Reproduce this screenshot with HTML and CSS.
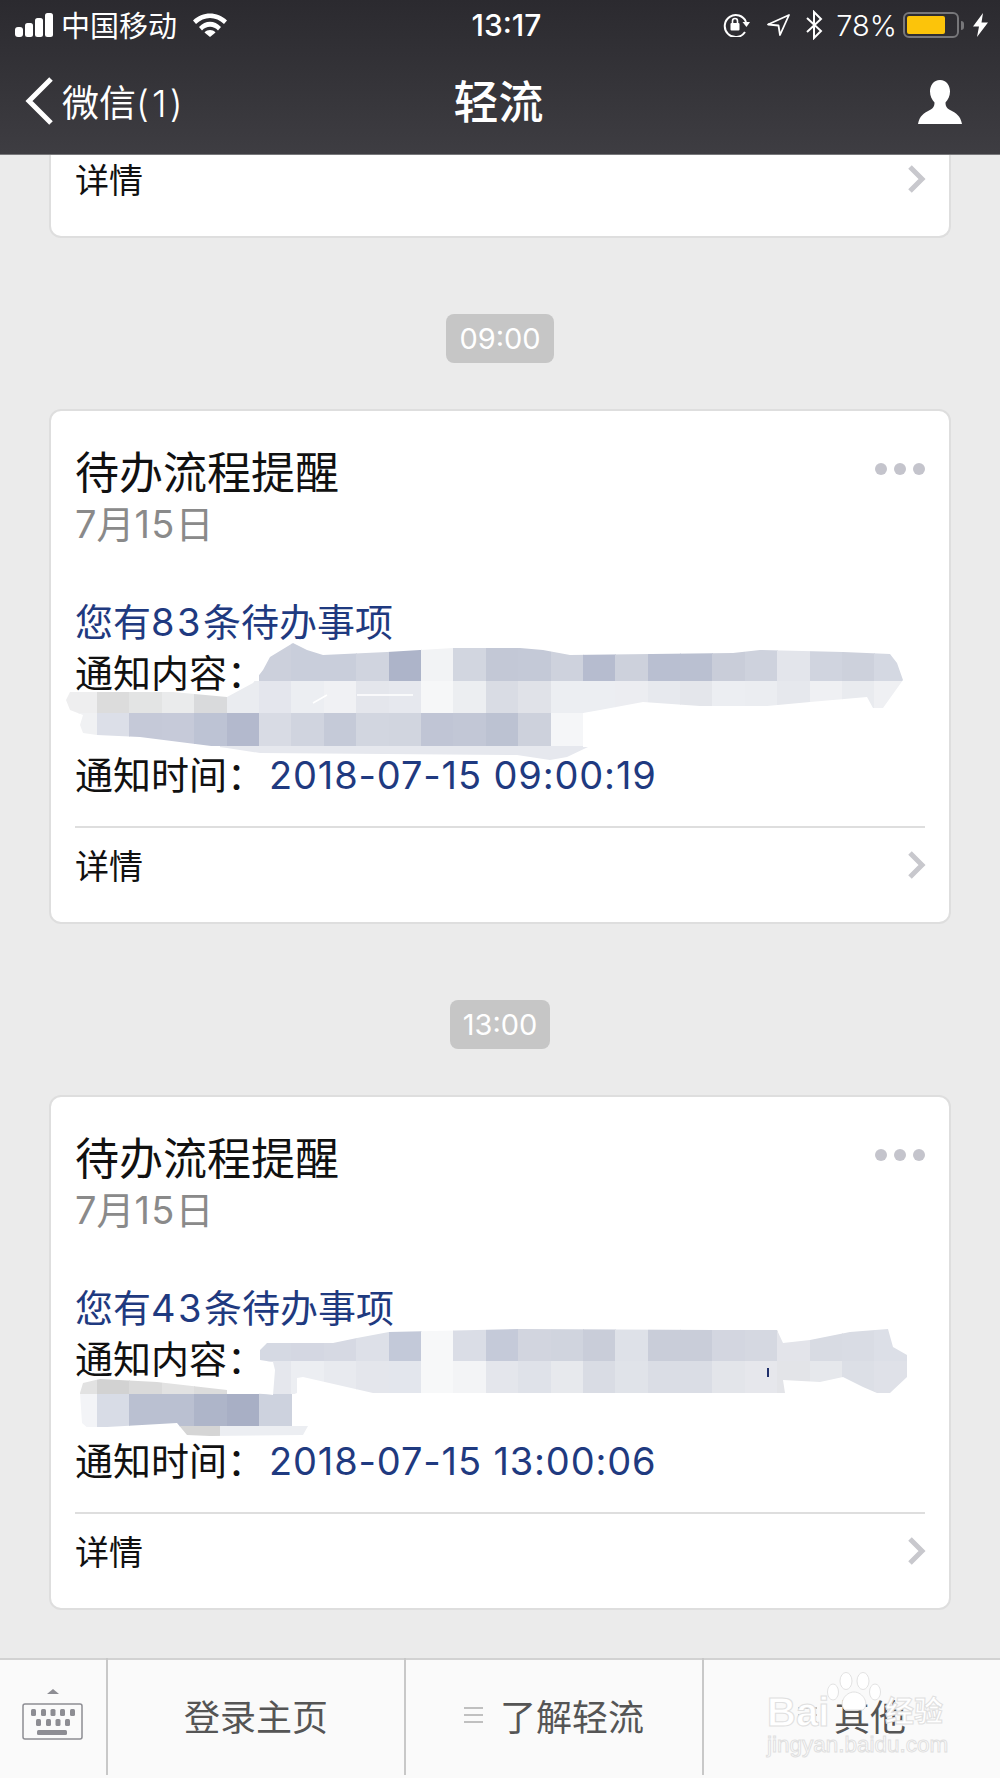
FILE: index.html
```html
<!DOCTYPE html>
<html lang="zh-CN">
<head>
    <meta charset="UTF-8">
    <meta name="viewport" content="width=device-width, initial-scale=1.0">
    <title>轻流</title>
    <link rel="stylesheet" href="styles.css">
</head>
<body>

    <header class="top">
        <div class="status">
            <div class="status-left">
                <svg class="signal" width="38" height="24" viewBox="0 0 38 24" fill="#fff">
                    <rect x="0" y="14" width="8" height="10" rx="3"/>
                    <rect x="10" y="10" width="8" height="14" rx="2.5"/>
                    <rect x="20" y="5" width="8" height="19" rx="2.5"/>
                    <rect x="30" y="0" width="8" height="24" rx="2.5"/>
                </svg>
                <span class="carrier">中国移动</span>
                <svg class="wifi" width="34" height="24" viewBox="0 0 34 24" fill="#fff">
                    <path d="M0 7.500C9.500-1.800 24.500-1.800 34 7.500L31 11C23 3 11 3 3 11Z"/>
                    <path d="M6 14C12.500 7 21.500 7 28 14L25 17.500C20.500 12.500 13.500 12.500 9 17.500Z"/>
                    <path d="M11.500 19.500C14.500 16.300 19.500 16.300 22.500 19.500L17 24Z"/>
                </svg>
            </div>
            <span class="clock">13:17</span>
            <div class="status-right">
                <svg class="ico-lock" width="28" height="24" viewBox="0 0 28 24" fill="none">
                    <path d="M22 19A11 11 0 1 1 23 9" stroke="#fff" stroke-width="2"/>
                    <path d="M19.500 9H27L23.500 14Z" fill="#fff"/>
                    <rect x="7.500" y="10" width="9" height="7.500" rx="1" fill="#fff"/>
                    <path d="M9.500 10V8A2.500 2.500 0 0 1 14.500 8V10" stroke="#fff" stroke-width="1.600"/>
                </svg>
                <svg class="ico-loc" width="23" height="22" viewBox="0 0 23 22" fill="none">
                    <path d="M22 1L1 10.500L11.500 11.500L13 21Z" stroke="#fff" stroke-width="1.800" stroke-linejoin="round"/>
                </svg>
                <svg class="ico-bt" width="17" height="30" viewBox="0 0 17 30" fill="none">
                    <path d="M1 8L15 21L8 28V2L15 9L1 22" stroke="#fff" stroke-width="2"/>
                </svg>
                <span class="percent">78%</span>
                <div class="battery"><div class="battery-fill"></div></div>
                <div class="battery-nub"></div>
                <svg class="ico-bolt" width="15" height="24" viewBox="0 0 15 24" fill="#fff">
                    <path d="M10 0L0 13.500H6L4 24L15 9.500H8.500Z"/>
                </svg>
            </div>
        </div>
        <nav class="nav">
            <div class="nav-back">
                <svg width="28" height="48" viewBox="0 0 28 48" fill="none">
                    <path d="M26 2L4 24L26 46" stroke="#fff" stroke-width="5"/>
                </svg>
                <span>微信<span class="nav-count">(1)</span></span>
            </div>
            <div class="nav-title">轻流</div>
            <div class="nav-user">
                <svg width="44" height="44" viewBox="0 0 44 44" fill="#fff">
                    <path d="M22 0C15.500 0 12 5.500 12 11.500C12 16 14 20 16.500 22.500C16.500 26.500 15 28.500 11 30.500C6 33 1.500 36 0 44H44C42.500 36 38 33 33 30.500C29 28.500 27.500 26.500 27.500 22.500C30 20 32 16 32 11.500C32 5.500 28.500 0 22 0Z"/>
                </svg>
            </div>
        </nav>
    </header>

    <main class="chat">
        <section class="card card-tail">
            <div class="detail">
                <span>详情</span>
                <svg class="chevron" width="20" height="28" viewBox="0 0 20 28" fill="none">
                    <path d="M3 2L15 14L3 26" stroke="#c8c8cd" stroke-width="5"/>
                </svg>
            </div>
        </section>

        <div class="time"><span>09:00</span></div>

        <section class="card">
            <div class="dots"><i></i><i></i><i></i></div>
            <h2 class="card-title">待办流程提醒</h2>
            <p class="card-date">7月<span class="date-num">15</span>日</p>
            <div class="card-body">
                <p class="blue">您有<span class="num">83</span>条待办事项</p>
                <p>通知内容：</p>
                <p>&nbsp;</p>
                <p>通知时间：<span class="blue stamp">2018-07-15 09:00:19</span></p>
            </div>
            <div class="detail detail-line">
                <span>详情</span>
                <svg class="chevron" width="20" height="28" viewBox="0 0 20 28" fill="none">
                    <path d="M3 2L15 14L3 26" stroke="#c8c8cd" stroke-width="5"/>
                </svg>
            </div>
            <!-- mosaic over the hidden text -->
            <svg class="redact" width="902" height="515" viewBox="49 409 902 515">
                <clipPath id="shapeOne">
                    <path d="M66 700L70 692L173 692L227 697L253 683L263 670L270 657L293 643L307 650L323 655L387 652L453 648L520 648L543 650L570 655L733 653L760 650L843 652L890 654L897 663L903 680L883 708L873 708L867 697L810 702L767 706L700 706L643 702L600 710L583 713L583 747L588 747L567 757L550 760L517 755L260 753L227 748L140 737L97 735L83 733L80 725L83 715L70 710Z"/>
                </clipPath>
                <g clip-path="url(#shapeOne)">
                    <rect x="60" y="680" width="37" height="34" fill="#eeeeef"/>
                    <rect x="75" y="713" width="22" height="33" fill="#f0f1f3"/>
                    <g transform="translate(0 640)">
                        <rect x="259" width="33" height="41" fill="#ccd0dc"/>
                        <rect x="291" width="33" height="41" fill="#c9cedb"/>
                        <rect x="324" width="33" height="41" fill="#c9cedb"/>
                        <rect x="356" width="33" height="41" fill="#d0d4df"/>
                        <rect x="389" width="33" height="41" fill="#adb4c9"/>
                        <rect x="421" width="33" height="41" fill="#f2f3f5"/>
                        <rect x="453" width="33" height="41" fill="#d2d6e0"/>
                        <rect x="486" width="33" height="41" fill="#c3c8d6"/>
                        <rect x="518" width="33" height="41" fill="#c4c9d7"/>
                        <rect x="551" width="33" height="41" fill="#ced2dd"/>
                        <rect x="583" width="33" height="41" fill="#b6bccf"/>
                        <rect x="615" width="33" height="41" fill="#cdd1dc"/>
                        <rect x="648" width="33" height="41" fill="#b9bfd1"/>
                        <rect x="680" width="33" height="41" fill="#bac0d1"/>
                        <rect x="712" width="33" height="41" fill="#c9cdd9"/>
                        <rect x="745" width="33" height="41" fill="#ced2dd"/>
                        <rect x="777" width="33" height="41" fill="#e3e5eb"/>
                        <rect x="810" width="33" height="41" fill="#d0d4df"/>
                        <rect x="842" width="33" height="41" fill="#cdd1dc"/>
                        <rect x="874" width="33" height="41" fill="#d4d8e2"/>
                    </g>
                    <g transform="translate(0 681)">
                        <rect x="97" width="33" height="33" fill="#dcdcdc"/>
                        <rect x="129" width="33" height="33" fill="#e3e4e4"/>
                        <rect x="162" width="33" height="33" fill="#eaebec"/>
                        <rect x="194" width="33" height="33" fill="#d9dadc"/>
                        <rect x="227" width="33" height="33" fill="#eaecf0"/>
                        <rect x="259" width="33" height="33" fill="#e4e6ed"/>
                        <rect x="291" width="33" height="33" fill="#eceef2"/>
                        <rect x="324" width="33" height="33" fill="#f0f1f4"/>
                        <rect x="356" width="33" height="33" fill="#e4e6ec"/>
                        <rect x="389" width="33" height="33" fill="#e6e8ee"/>
                        <rect x="421" width="33" height="33" fill="#f6f7f8"/>
                        <rect x="453" width="33" height="33" fill="#eceef1"/>
                        <rect x="486" width="33" height="33" fill="#d9dce4"/>
                        <rect x="518" width="33" height="33" fill="#e0e2e8"/>
                        <rect x="551" width="33" height="33" fill="#eceef2"/>
                        <rect x="583" width="33" height="33" fill="#eceef2"/>
                        <rect x="615" width="33" height="33" fill="#ecedf1"/>
                        <rect x="648" width="33" height="33" fill="#e7e9ee"/>
                        <rect x="680" width="33" height="33" fill="#e4e6eb"/>
                        <rect x="712" width="33" height="33" fill="#eceef2"/>
                        <rect x="745" width="33" height="33" fill="#ebedf1"/>
                        <rect x="777" width="33" height="33" fill="#e6e8ed"/>
                        <rect x="810" width="33" height="33" fill="#eff0f3"/>
                        <rect x="842" width="33" height="33" fill="#e9ebef"/>
                        <rect x="874" width="33" height="33" fill="#eff0f3"/>
                    </g>
                    <g transform="translate(0 713)">
                        <rect x="97" width="33" height="33" fill="#dcdfe8"/>
                        <rect x="129" width="33" height="33" fill="#c5c9d8"/>
                        <rect x="162" width="33" height="33" fill="#c6cad9"/>
                        <rect x="194" width="33" height="33" fill="#bdc3d4"/>
                        <rect x="227" width="33" height="33" fill="#b3b9cd"/>
                        <rect x="259" width="33" height="33" fill="#d8dbe4"/>
                        <rect x="291" width="33" height="33" fill="#d0d4df"/>
                        <rect x="324" width="33" height="33" fill="#c5cad8"/>
                        <rect x="356" width="33" height="33" fill="#d2d6e0"/>
                        <rect x="389" width="33" height="33" fill="#d1d5df"/>
                        <rect x="421" width="33" height="33" fill="#c0c5d5"/>
                        <rect x="453" width="33" height="33" fill="#c2c7d6"/>
                        <rect x="486" width="33" height="33" fill="#bcc2d2"/>
                        <rect x="518" width="33" height="33" fill="#cdd1dc"/>
                        <rect x="551" width="33" height="33" fill="#f5f6f8"/>
                    </g>
                    <rect x="220" y="746" width="370" height="15" fill="#e6e8ee"/>
                    <path d="M313 703L327 695M357 695H413" stroke="#fff" stroke-width="1.500" fill="none"/>
                </g>
            </svg>
        </section>

        <div class="time"><span>13:00</span></div>

        <section class="card">
            <div class="dots"><i></i><i></i><i></i></div>
            <h2 class="card-title">待办流程提醒</h2>
            <p class="card-date">7月<span class="date-num">15</span>日</p>
            <div class="card-body">
                <p class="blue">您有<span class="num">43</span>条待办事项</p>
                <p>通知内容：</p>
                <p>&nbsp;</p>
                <p>通知时间：<span class="blue stamp">2018-07-15 13:00:06</span></p>
            </div>
            <div class="detail detail-line">
                <span>详情</span>
                <svg class="chevron" width="20" height="28" viewBox="0 0 20 28" fill="none">
                    <path d="M3 2L15 14L3 26" stroke="#c8c8cd" stroke-width="5"/>
                </svg>
            </div>
            <svg class="redact" width="902" height="515" viewBox="49 1095 902 515">
                <clipPath id="shapeTwo">
                    <path d="M260 1355L260 1350L267 1343L333 1343L357 1338L389 1332L520 1329L713 1330L777 1330L783 1343L810 1340L850 1332L888 1329L893 1347L907 1355L907 1377L890 1393L877 1393L863 1387L843 1377L820 1382L783 1380L785 1393L373 1393L303 1377L297 1378L297 1393L292 1395L292 1426L308 1426L303 1435L210 1436L187 1435L177 1423L107 1427L90 1430L82 1423L80 1393L83 1383L100 1379L157 1382L227 1390L273 1395L275 1370L273 1362L260 1360Z"/>
                </clipPath>
                <g clip-path="url(#shapeTwo)">
                    <g transform="translate(0 1325)">
                        <rect x="259" width="33" height="37" fill="#d5d9e3"/>
                        <rect x="291" width="33" height="37" fill="#d4d7e2"/>
                        <rect x="324" width="33" height="37" fill="#d6d9e3"/>
                        <rect x="356" width="33" height="37" fill="#dde0e8"/>
                        <rect x="389" width="33" height="37" fill="#c3c9d9"/>
                        <rect x="421" width="33" height="37" fill="#f7f8f9"/>
                        <rect x="453" width="33" height="37" fill="#dadde6"/>
                        <rect x="486" width="33" height="37" fill="#c5cad9"/>
                        <rect x="518" width="33" height="37" fill="#d2d5df"/>
                        <rect x="551" width="33" height="37" fill="#d0d4de"/>
                        <rect x="583" width="33" height="37" fill="#c9cdd9"/>
                        <rect x="615" width="33" height="37" fill="#dee1e8"/>
                        <rect x="648" width="33" height="37" fill="#c9cdd9"/>
                        <rect x="680" width="33" height="37" fill="#c9cdd9"/>
                        <rect x="712" width="33" height="37" fill="#d3d6e0"/>
                        <rect x="745" width="33" height="37" fill="#d5d8e1"/>
                        <rect x="777" width="33" height="37" fill="#e3e4ea"/>
                        <rect x="810" width="33" height="37" fill="#d8dbe3"/>
                        <rect x="842" width="33" height="37" fill="#d9dce4"/>
                        <rect x="874" width="33" height="37" fill="#dcdfe7"/>
                    </g>
                    <g transform="translate(0 1361)">
                        <rect x="259" width="33" height="36" fill="#e5e7ed"/>
                        <rect x="291" width="33" height="33" fill="#eceef2"/>
                        <rect x="324" width="33" height="33" fill="#e8eaef"/>
                        <rect x="356" width="33" height="33" fill="#e4e6ec"/>
                        <rect x="389" width="33" height="33" fill="#e3e6ed"/>
                        <rect x="421" width="33" height="33" fill="#f7f8f9"/>
                        <rect x="453" width="33" height="33" fill="#f3f4f6"/>
                        <rect x="486" width="33" height="33" fill="#e4e6ec"/>
                        <rect x="518" width="33" height="33" fill="#dfe2e9"/>
                        <rect x="551" width="33" height="33" fill="#e7e9ed"/>
                        <rect x="583" width="33" height="33" fill="#d9dce4"/>
                        <rect x="615" width="33" height="33" fill="#e0e3e9"/>
                        <rect x="648" width="33" height="33" fill="#dadde5"/>
                        <rect x="680" width="33" height="33" fill="#dadde5"/>
                        <rect x="712" width="33" height="33" fill="#e3e5ea"/>
                        <rect x="745" width="33" height="33" fill="#e6e7ec"/>
                        <rect x="777" width="33" height="33" fill="#e3e4e8"/>
                        <rect x="810" width="33" height="33" fill="#e6e8ec"/>
                        <rect x="842" width="33" height="33" fill="#dcdfe6"/>
                        <rect x="874" width="33" height="33" fill="#dfe1e8"/>
                    </g>
                    <g transform="translate(0 1375)">
                        <rect x="75" width="22" height="19" fill="#e2e2e2"/>
                        <rect x="97" width="33" height="19" fill="#d2d2d2"/>
                        <rect x="129" width="33" height="19" fill="#dadada"/>
                        <rect x="162" width="33" height="19" fill="#e2e2e2"/>
                        <rect x="194" width="33" height="19" fill="#dcdcdc"/>
                    </g>
                    <g transform="translate(0 1394)">
                        <rect x="75" width="22" height="33" fill="#f3f4f7"/>
                        <rect x="97" width="33" height="33" fill="#d8dce6"/>
                        <rect x="129" width="33" height="33" fill="#bac0d1"/>
                        <rect x="162" width="33" height="33" fill="#bac0d1"/>
                        <rect x="194" width="33" height="33" fill="#aeb5c9"/>
                        <rect x="227" width="33" height="33" fill="#a8afc5"/>
                        <rect x="259" width="33" height="33" fill="#cdd2de"/>
                    </g>
                    <rect x="175" y="1426" width="45" height="12" fill="#d5d5d5"/>
                    <rect x="220" y="1426" width="90" height="12" fill="#eceef2"/>
                </g>
                <rect x="767" y="1368" width="2" height="9" fill="#1f2f6b"/>
            </svg>
        </section>
    </main>

    <footer class="menu">
        <div class="menu-key">
            <svg width="62" height="54" viewBox="0 0 62 54" fill="#8d8d93">
                <path d="M25 6L31 1L37 6Z"/>
                <rect x="1" y="16" width="59" height="35" rx="2" fill="none" stroke="#8d8d93" stroke-width="1.500"/>
                <rect x="9" y="21" width="5" height="7" rx="1.500"/>
                <rect x="19" y="21" width="5" height="7" rx="1.500"/>
                <rect x="28.500" y="21" width="5" height="7" rx="1.500"/>
                <rect x="38" y="21" width="5" height="7" rx="1.500"/>
                <rect x="48" y="21" width="5" height="7" rx="1.500"/>
                <rect x="14" y="31" width="5" height="7" rx="1.500"/>
                <rect x="24" y="31" width="5" height="7" rx="1.500"/>
                <rect x="33.500" y="31" width="5" height="7" rx="1.500"/>
                <rect x="43" y="31" width="5" height="7" rx="1.500"/>
                <rect x="15" y="42" width="30" height="5" rx="1.500"/>
            </svg>
        </div>
        <div class="menu-item">登录主页</div>
        <div class="menu-item"><span class="bars"><i></i><i></i><i></i></span>了解轻流</div>
        <div class="menu-item"><span class="bars"><i></i><i></i><i></i></span>其他</div>

        <!-- watermark stamped on the photo -->
        <div class="mark">
            <span class="mark-bai">Bai</span>
            <svg class="mark-paw" width="54" height="40" viewBox="0 0 54 40" fill="#fff" stroke="#e2e2e2">
                <ellipse cx="6" cy="20" rx="5.500" ry="8"/>
                <ellipse cx="19" cy="9" rx="6" ry="8.500"/>
                <ellipse cx="36" cy="9" rx="6" ry="8.500"/>
                <ellipse cx="48" cy="20" rx="5.500" ry="8"/>
                <path d="M27 20C18 20 11 32 18 38H36C43 32 36 20 27 20Z"/>
            </svg>
            <span class="mark-jy">经验</span>
            <span class="mark-url">jingyan.baidu.com</span>
        </div>
    </footer>

</body>
</html>
```

FILE: styles.css
```css
/* page */
html, body {
    margin: 0;
    padding: 0;
}

body {
    width: 1000px;
    height: 1778px;
    overflow: hidden;
    display: flex;
    flex-direction: column;
    background-color: #ebebeb;
    font-family: Inter, "Noto Sans CJK SC", sans-serif;
    color: #111;
}

h2, p {
    margin: 0;
    font-weight: normal;
}

/* top bar */
.top {
    height: 154px;
    flex: none;
    background: linear-gradient(#2b2a2f, #36353a 60%, #3e3d42);
    border-bottom: 1px solid #77777a;
    color: #fff;
}

.status {
    height: 50px;
    display: grid;
    grid-template-columns: 1fr auto 1fr;
    align-items: center;
    padding: 0 12px 0 15px;
    font-size: 29px;
}

.status-left, .status-right {
    display: flex;
    align-items: center;
}

.status-right {
    justify-content: flex-end;
}

.carrier {
    margin-left: 8px;
    margin-top: -2px;
    font-size: 29px;
}

.wifi {
    margin-left: 16px;
}

.clock {
    margin-left: 10px;
    font-size: 30px;
    font-weight: 500;
}

.ico-loc {
    margin-left: 16px;
}

.ico-bt {
    margin-left: 16px;
}

.percent {
    margin-left: 13px;
    font-weight: 300;
}

.battery {
    margin-left: 6px;
    width: 56px;
    height: 26px;
    box-sizing: border-box;
    border: 2px solid #77777a;
    border-radius: 6px;
    padding: 2px;
}

.battery-fill {
    width: 38px;
    height: 100%;
    background-color: #fcc40a;
    border-radius: 2px;
}

.battery-nub {
    width: 3px;
    height: 9px;
    margin-left: 2px;
    background-color: #77777a;
    border-radius: 0 3px 3px 0;
}

.ico-bolt {
    margin-left: 9px;
}

.nav {
    height: 104px;
    display: grid;
    grid-template-columns: 1fr auto 1fr;
    align-items: center;
    padding: 0 38px 0 25px;
}

.nav-back {
    display: flex;
    align-items: center;
    gap: 9px;
    font-size: 37px;
    margin-top: -2px;
}

.nav-count {
    font-weight: 300;
    letter-spacing: 3.200px;
}

.nav-title {
    font-size: 45px;
    font-weight: 500;
    margin-left: 10px;
    margin-top: -6px;
}

.nav-user {
    display: flex;
    justify-content: flex-end;
}

/* messages */
.chat {
    flex: 1;
    padding: 0 49px;
}

.card {
    position: relative;
    height: 515px;
    box-sizing: border-box;
    padding: 36px 24px 0;
    background-color: #fff;
    border: 2px solid #dedede;
    border-radius: 12px;
}

.card-tail {
    height: 83px;
    padding-top: 0;
    border-top: none;
    border-radius: 0 0 12px 12px;
}

.time {
    display: flex;
    justify-content: center;
    margin: 76px 0 46px;
}

.time span {
    padding: 0 13px;
    height: 49px;
    line-height: 49px;
    background-color: #c6c6c6;
    border-radius: 8px;
    color: #fff;
    font-size: 29px;
}

.dots {
    position: absolute;
    top: 52px;
    right: 24px;
    display: flex;
    gap: 7px;
}

.dots i {
    width: 12px;
    height: 12px;
    border-radius: 50%;
    background-color: #c4c4cc;
}

.card-title {
    font-size: 44px;
    line-height: 53px;
}

.card-date {
    font-size: 38px;
    line-height: 48px;
    color: #8a8a8a;
}

.date-num {
    letter-spacing: 1.200px;
}

.card-body {
    margin-top: 49px;
    font-size: 38px;
    line-height: 51px;
    white-space: nowrap;
}

.blue {
    color: #1f3a80;
}

.num {
    letter-spacing: 2.500px;
}

.stamp {
    margin-left: 4px;
    letter-spacing: .85px;
}

.detail {
    display: flex;
    align-items: center;
    justify-content: space-between;
    height: 76px;
    box-sizing: border-box;
    padding-bottom: 2px;
    font-size: 34px;
}

.detail-line {
    margin-top: 25px;
    border-top: 2px solid #dedede;
}

.card-tail .detail {
    height: 50px;
    padding-bottom: 4px;
}

.chevron {
    margin-right: -2px;
    margin-top: 2px;
}

.redact {
    position: absolute;
    left: -2px;
    top: -2px;
}

/* bottom menu */
.menu {
    position: relative;
    height: 120px;
    flex: none;
    box-sizing: border-box;
    display: grid;
    grid-template-columns: 106px 298px 298px 298px;
    padding-bottom: 3px;
    background-color: #fafafa;
    box-shadow: inset 0 2px 0 #d2d2d2;
}

.menu-key {
    display: flex;
    align-items: center;
    justify-content: center;
    padding-bottom: 4px;
}

.menu-item {
    display: flex;
    align-items: center;
    justify-content: center;
    gap: 17px;
    padding-bottom: 4px;
    border-left: 2px solid #c8c8c8;
    font-size: 36px;
    color: #555;
}

.bars {
    display: flex;
    flex-direction: column;
    gap: 5px;
}

.bars i {
    width: 19px;
    height: 2px;
    background-color: #c0c0c0;
}

.mark {
    position: absolute;
    left: 767px;
    top: 14px;
    width: 180px;
    height: 84px;
    color: #fff;
    -webkit-text-stroke: 1px #e0e0e0;
}

.mark-bai {
    position: absolute;
    left: 0;
    top: 18px;
    font-size: 40px;
    line-height: 44px;
    font-weight: 700;
    font-family: "Liberation Sans", sans-serif;
}

.mark-paw {
    position: absolute;
    left: 60px;
    top: 0;
}

.mark-jy {
    position: absolute;
    left: 118px;
    top: 22px;
    font-size: 29px;
    line-height: 36px;
    font-weight: 700;
}

.mark-url {
    position: absolute;
    left: 0;
    top: 58px;
    font-size: 22.500px;
    line-height: 30px;
    font-family: "Liberation Sans", sans-serif;
    white-space: nowrap;
}
```
